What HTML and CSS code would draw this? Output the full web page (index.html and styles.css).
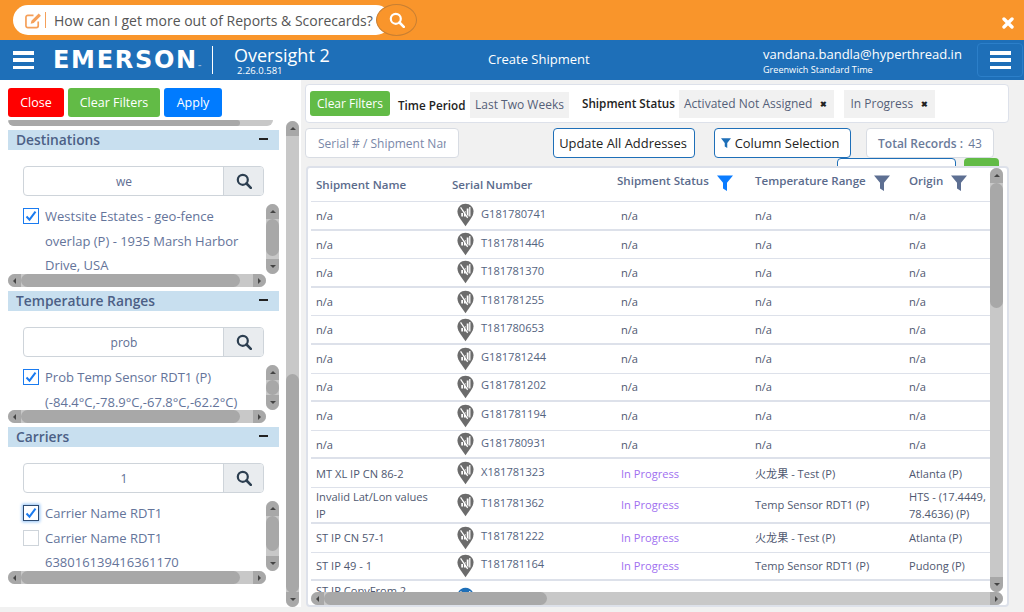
FILE: index.html
```html
<!DOCTYPE html>
<html lang="en">
<head>
<meta charset="utf-8">
<title>Oversight 2 - Create Shipment</title>
<link rel="stylesheet" href="styles.css">
</head>
<body>
<svg class="defs" width="0" height="0" aria-hidden="true">
  <defs>
    <symbol id="pin" viewBox="0 0 18 25">
      <path d="M9 .5C4.200.5.500 4.200.500 8.900c0 3 1.400 5.400 3.300 8.200L9 24.500l5.200-7.400c1.900-2.800 3.300-5.200 3.300-8.200C17.500 4.200 13.800.5 9 .5z" fill="currentColor"/>
      <path d="M4.500 10.500h1.900v3.500H4.500zM7.400 8.500h1.900v5.500H7.400zM10.300 5.500h1.900v8.500h-1.900zM12.900 4h1.300v10h-1.300z" fill="#fff"/>
      <path d="M4.500 4l7.500 11" stroke="#6b6b6b" stroke-width="1" fill="none"/>
      <path d="M3.800 4.500l7.500 11" stroke="#fff" stroke-width="1.300" fill="none"/>
    </symbol>
    <symbol id="mag" viewBox="0 0 16 16">
      <circle cx="6.800" cy="6.800" r="5" fill="none" stroke="currentColor" stroke-width="2.200"/>
      <path d="M10.500 10.500l4.300 4.300" stroke="currentColor" stroke-width="2.600" stroke-linecap="round"/>
    </symbol>
    <symbol id="funnel" viewBox="0 0 16 16">
      <path d="M0 .5h16L10 7.800V16l-4-2.500V7.800z" fill="currentColor"/>
    </symbol>
    <symbol id="tick" viewBox="0 0 14 14">
      <path d="M2.500 7.500l3 3.200 6-8" fill="none" stroke="#1a7bf0" stroke-width="2"/>
    </symbol>
  </defs>
</svg>

<div class="banner">
  <div class="ask">
    <svg class="ask-icon" viewBox="0 0 18 18" width="17" height="17"><path d="M14 10v4.500a2 2 0 0 1-2 2H3a2 2 0 0 1-2-2v-9a2 2 0 0 1 2-2h6" fill="none" stroke="#f5a05a" stroke-width="1.800"/><path d="M6 12.500l.8-3.200L14.500 1.500l2.400 2.400-7.700 7.800z" fill="#f5a05a"/></svg>
    <span class="ask-sep"></span>
    <span class="ask-text">How can I get more out of Reports &amp; Scorecards?</span>
    <span class="ask-go"><svg width="16" height="16" class="ask-mag"><use href="#mag"/></svg></span>
  </div>
  <svg class="banner-x" viewBox="0 0 12 12" width="12" height="12"><path d="M2 2l8 8M10 2l-8 8" stroke="#fff" stroke-width="3.400" stroke-linecap="round"/></svg>
</div>

<header class="topbar">
  <div class="burger burger-left"><i></i><i></i><i></i></div>
  <div class="logo">EMERSON<small>™</small></div>
  <div class="app">
    <div class="app-name">Oversight 2</div>
    <div class="app-ver">2.26.0.581</div>
  </div>
  <div class="page-title">Create Shipment</div>
  <div class="user">
    <div class="user-mail">vandana.bandla@hyperthread.in</div>
    <div class="user-tz">Greenwich Standard Time</div>
  </div>
  <div class="menu-btn"><div class="burger"><i></i><i></i><i></i></div></div>
</header>

<main class="main">
  <aside class="side">
    <div class="side-actions">
      <button class="btn btn-red">Close</button>
      <button class="btn btn-green">Clear Filters</button>
      <button class="btn btn-blue">Apply</button>
    </div>
    <div class="side-body">
      <div class="side-scroll">
        <div class="sb peek"><span class="sb-thumb th-peek"></span></div>

        <section class="group">
          <h3 class="group-head">Destinations<span class="minus"></span></h3>
          <div class="search"><span class="search-val">we</span><span class="search-btn"><svg width="16" height="16"><use href="#mag"/></svg></span></div>
          <div class="list-wrap">
            <div class="list list-a">
              <label class="item"><span class="cb on"><svg width="14" height="14"><use href="#tick"/></svg></span><span>Westsite Estates - geo-fence overlap (P) - 1935 Marsh Harbor Drive, USA</span></label>
            </div>
            <div class="sb v"><span class="sb-btn up"></span><span class="sb-track"><span class="sb-thumb th-a"></span></span><span class="sb-btn down"></span></div>
            <div class="sb h"><span class="sb-btn left"></span><span class="sb-track"><span class="sb-thumb th-h"></span></span><span class="sb-btn right"></span></div>
          </div>
        </section>

        <section class="group">
          <h3 class="group-head">Temperature Ranges<span class="minus"></span></h3>
          <div class="search"><span class="search-val">prob</span><span class="search-btn"><svg width="16" height="16"><use href="#mag"/></svg></span></div>
          <div class="list-wrap">
            <div class="list list-b">
              <label class="item"><span class="cb on"><svg width="14" height="14"><use href="#tick"/></svg></span><span>Prob Temp Sensor RDT1 (P) (-84.4°C,-78.9°C,-67.8°C,-62.2°C)</span></label>
            </div>
            <div class="sb v"><span class="sb-btn up"></span><span class="sb-track"><span class="sb-thumb th-b"></span></span><span class="sb-btn down"></span></div>
            <div class="sb h"><span class="sb-btn left"></span><span class="sb-track"><span class="sb-thumb th-h"></span></span><span class="sb-btn right"></span></div>
          </div>
        </section>

        <section class="group">
          <h3 class="group-head">Carriers<span class="minus"></span></h3>
          <div class="search"><span class="search-val">1</span><span class="search-btn"><svg width="16" height="16"><use href="#mag"/></svg></span></div>
          <div class="list-wrap">
            <div class="list list-a">
              <label class="item"><span class="cb on focus"><svg width="14" height="14"><use href="#tick"/></svg></span><span>Carrier Name RDT1</span></label>
              <label class="item"><span class="cb"></span><span>Carrier Name RDT1 638016139416361170</span></label>
            </div>
            <div class="sb v"><span class="sb-btn up"></span><span class="sb-track"><span class="sb-thumb th-c"></span></span><span class="sb-btn down"></span></div>
            <div class="sb h"><span class="sb-btn left"></span><span class="sb-track"><span class="sb-thumb th-h"></span></span><span class="sb-btn right"></span></div>
          </div>
        </section>
      </div>
      <div class="sb v side-sb"><span class="sb-btn up"></span><span class="sb-track"><span class="sb-thumb th-side"></span></span><span class="sb-btn down"></span></div>
    </div>
  </aside>

  <div class="content">
    <div class="filterbar">
      <button class="btn btn-green btn-sm">Clear Filters</button>
      <span class="f-label f-time">Time Period</span>
      <span class="chip chip-low">Last Two Weeks</span>
      <span class="f-label f-status">Shipment Status</span>
      <span class="chip">Activated Not Assigned<b class="chip-x">✖</b></span>
      <span class="chip chip-gap">In Progress<b class="chip-x">✖</b></span>
    </div>

    <div class="toolbar">
      <input class="serial" type="text" placeholder="Serial # / Shipment Name">
      <button class="tool tool-update">Update All Addresses</button>
      <button class="tool tool-col"><svg class="tool-ic" width="10" height="10"><use href="#funnel"/></svg>Column Selection</button>
      <div class="total"><b>Total Records :</b> <span>43</span></div>
    </div>

    <div class="peek-row"><span class="peek-a"></span><span class="peek-b"></span></div>

    <div class="panel">
      <div class="panel-top">
        <div class="tbl">
          <div class="row head">
            <div class="hc hc-low">Shipment Name</div>
            <div class="hc hc-low">Serial Number</div>
            <div class="hc">Shipment Status<svg class="fn fn-on" width="16" height="16"><use href="#funnel"/></svg></div>
            <div class="hc">Temperature Range<svg class="fn" width="16" height="16"><use href="#funnel"/></svg></div>
            <div class="hc">Origin<svg class="fn" width="16" height="16"><use href="#funnel"/></svg></div>
          </div>
          <div class="row"><div>n/a</div><div class="ser"><svg class="pin" width="17" height="24"><use href="#pin"/></svg><span>G181780741</span></div><div class="st">n/a</div><div>n/a</div><div>n/a</div></div>
          <div class="row"><div>n/a</div><div class="ser"><svg class="pin" width="17" height="24"><use href="#pin"/></svg><span>T181781446</span></div><div class="st">n/a</div><div>n/a</div><div>n/a</div></div>
          <div class="row"><div>n/a</div><div class="ser"><svg class="pin" width="17" height="24"><use href="#pin"/></svg><span>T181781370</span></div><div class="st">n/a</div><div>n/a</div><div>n/a</div></div>
          <div class="row"><div>n/a</div><div class="ser"><svg class="pin" width="17" height="24"><use href="#pin"/></svg><span>T181781255</span></div><div class="st">n/a</div><div>n/a</div><div>n/a</div></div>
          <div class="row"><div>n/a</div><div class="ser"><svg class="pin" width="17" height="24"><use href="#pin"/></svg><span>T181780653</span></div><div class="st">n/a</div><div>n/a</div><div>n/a</div></div>
          <div class="row"><div>n/a</div><div class="ser"><svg class="pin" width="17" height="24"><use href="#pin"/></svg><span>G181781244</span></div><div class="st">n/a</div><div>n/a</div><div>n/a</div></div>
          <div class="row"><div>n/a</div><div class="ser"><svg class="pin" width="17" height="24"><use href="#pin"/></svg><span>G181781202</span></div><div class="st">n/a</div><div>n/a</div><div>n/a</div></div>
          <div class="row"><div>n/a</div><div class="ser"><svg class="pin" width="17" height="24"><use href="#pin"/></svg><span>G181781194</span></div><div class="st">n/a</div><div>n/a</div><div>n/a</div></div>
          <div class="row"><div>n/a</div><div class="ser"><svg class="pin" width="17" height="24"><use href="#pin"/></svg><span>G181780931</span></div><div class="st">n/a</div><div>n/a</div><div>n/a</div></div>
          <div class="row"><div class="nm">MT XL IP CN 86-2</div><div class="ser"><svg class="pin" width="17" height="24"><use href="#pin"/></svg><span>X181781323</span></div><div class="st prog">In Progress</div><div>火龙果 - Test (P)</div><div>Atlanta (P)</div></div>
          <div class="row tall"><div class="nm">Invalid Lat/Lon values IP</div><div class="ser"><svg class="pin" width="17" height="24"><use href="#pin"/></svg><span>T181781362</span></div><div class="st prog">In Progress</div><div>Temp Sensor RDT1 (P)</div><div>HTS - (17.4449, 78.4636) (P)</div></div>
          <div class="row"><div class="nm">ST IP CN 57-1</div><div class="ser"><svg class="pin" width="17" height="24"><use href="#pin"/></svg><span>T181781222</span></div><div class="st prog">In Progress</div><div>火龙果 - Test (P)</div><div>Atlanta (P)</div></div>
          <div class="row"><div class="nm">ST IP 49 - 1</div><div class="ser"><svg class="pin" width="17" height="24"><use href="#pin"/></svg><span>T181781164</span></div><div class="st prog">In Progress</div><div>Temp Sensor RDT1 (P)</div><div>Pudong (P)</div></div>
          <div class="row tall"><div class="nm">ST IP CopyFrom 2 Shipment</div><div class="ser"><svg class="pin pin-blue" width="17" height="24"><use href="#pin"/></svg></div><div></div><div></div><div></div></div>
        </div>
        <div class="sb v"><span class="sb-btn up"></span><span class="sb-track"><span class="sb-thumb th-tv"></span></span><span class="sb-btn down"></span></div>
      </div>
      <div class="sb h tbl-h"><span class="sb-btn left"></span><span class="sb-track"><span class="sb-thumb th-th"></span></span><span class="sb-btn right"></span></div>
    </div>
  </div>
</main>
</body>
</html>
```

FILE: styles.css
```css
* { box-sizing: border-box; }
html, body { margin: 0; padding: 0; }
body {
  width: 1024px; height: 612px; overflow: hidden;
  font-family: "Open Sans", "Noto Sans CJK SC", sans-serif;
  font-size: 12px; color: #555f78; background: #f1f1f1;
  display: flex; flex-direction: column;
}
.defs { position: absolute; }

/* banner */
.banner { height: 40px; background: #f9952b; display: flex; align-items: flex-start; padding: 5px 10px 0 13px; flex: none; }
.ask { width: 378px; height: 30px; background: #fff; border-radius: 15px; display: flex; align-items: center; padding-left: 12px; position: relative; }
.ask-icon { flex: none; }
.ask-sep { width: 1px; height: 16px; background: #f5a05a; margin: 0 8px 0 3px; }
.ask-text { font-size: 14px; color: #555; white-space: nowrap; }
.ask-go { position: absolute; left: 363px; top: -1px; width: 41px; height: 32px; border-radius: 50%; background: #f9952b; border: 1px solid #c77f33; display: flex; align-items: center; justify-content: center; color: #fff; }
.ask-mag { color: #fff; }
.banner-x { margin: 12px 0 0 auto; }

/* top bar */
.topbar { height: 40px; background: #1e6fb8; color: #fff; display: flex; align-items: center; flex: none; padding-left: 13px; position: relative; }
.burger { display: flex; flex-direction: column; justify-content: space-between; width: 21px; height: 18px; }
.burger i { display: block; height: 3.500px; background: #fff; }
.logo { margin-left: 19px; width: 160px; height: 28px; border-right: 1px solid #fff; font-family: "DejaVu Sans", sans-serif; font-weight: 700; font-size: 24px; line-height: 28px; letter-spacing: 1.700px; white-space: nowrap; }
.logo small { font-size: 4px; font-weight: 400; letter-spacing: 0; }
.app { margin-left: 21px; width: 254px; }
.app-name { font-size: 18px; line-height: 22px; }
.app-ver { font-size: 9.500px; line-height: 10px; margin-left: 3px; }
.page-title { width: 275px; font-size: 13px; position: relative; top: -1px; }
.user { width: 214px; }
.user-mail { font-size: 13px; line-height: 16px; margin-top: 2px; }
.user-tz { font-size: 9.100px; line-height: 14px; margin-top: 1px; }
.menu-btn { width: 46px; height: 34px; border: 1px solid #2c7fc9; border-radius: 4px; display: flex; align-items: center; justify-content: center; }

/* layout */
.main { flex: 1; display: flex; min-height: 0; }
.side { width: 301px; height: 527px; background: #fff; display: flex; flex-direction: column; flex: none; }
.side-actions { height: 40px; padding: 8px 8px 0; display: flex; gap: 4px; flex: none; }
.btn { border: 0; border-radius: 3px; color: #fff; height: 29px; font: 12.500px "Open Sans", sans-serif; padding: 0; cursor: pointer; }
.btn-red { background: #f00; width: 56px; }
.btn-green { background: #62bb46; width: 92px; }
.btn-blue { background: #007bff; width: 58px; }
.btn-sm { width: 80px; height: 25px; font-size: 12px; }

.side-body { flex: 1; display: flex; min-height: 0; padding-right: 1px; }
.side-scroll { width: 286px; overflow: hidden; padding: 0 7px 0 8px; }

/* scrollbars */
.sb { background: #c8c8c8; display: flex; border-radius: 7px; overflow: hidden; flex: none; }
.sb.v { flex-direction: column; width: 13px; height: 70px; }
.sb.h { height: 13px; }
.sb-track { flex: 1; position: relative; display: flex; min-width: 0; min-height: 0; }
.sb.v .sb-track { flex-direction: column; }
.sb-thumb { background: #a8a8a8; border-radius: 7px; display: block; flex: none; }
.sb-btn { background: #a8a8a8; flex: none; display: flex; align-items: center; justify-content: center; }
.sb.v .sb-btn { height: 15px; }
.sb.h .sb-btn { width: 13px; }
.sb-btn::after { content: ""; border: 3.500px solid transparent; }
.up::after { border-bottom-color: #444; border-top-width: 0; }
.down::after { border-top-color: #444; border-bottom-width: 0; }
.left::after { border-right-color: #444; border-left-width: 0; }
.right::after { border-left-color: #444; border-right-width: 0; }
.sb.peek { height: 6px; margin: 0 6px 4px 0; border-radius: 0 0 7px 7px; }
.th-peek { width: 232px; height: 6px; }
.th-h { width: 219px; }
.sb.v .th-a { height: 37px; }
.sb.v .th-b { height: 15px; }
.sb.v .th-c { height: 35px; }
.sb.v .th-side { height: 219px; margin-top: 238px; }
.sb.v .th-tv { height: 125px; }
.th-th { width: 223px; }
.sb.v.side-sb { height: 486px; margin-top: 1px; }

/* filter groups */
.group { margin-bottom: 4px; }
.group-head { margin: 0; height: 20px; line-height: 20px; background: #c8dfef; color: #4c5f86; font-size: 13.800px; font-weight: 600; padding-left: 8px; position: relative; }
.minus { position: absolute; right: 11px; top: 8px; width: 9px; height: 2px; background: #222; }
.search { margin: 16px 15px 8px; height: 30px; display: flex; border: 1px solid #ced4da; border-radius: 4px; background: #fff; }
.search-val { flex: 1; text-align: center; line-height: 30px; font-size: 12px; color: #5e6e93; padding-left: 1px; }
.search-btn { width: 40px; background: #e9ecef; border-left: 1px solid #ced4da; color: #2c3e50; display: flex; align-items: center; justify-content: center; border-radius: 0 3px 3px 0; }
.list-wrap { display: grid; grid-template-columns: 258px 13px; }
.list { overflow: hidden; padding: 0 20px 0 15px; font-size: 13px; line-height: 24.700px; color: #64749a; }
.list-a { height: 70px; }
.list-b { height: 45px; }
.group:nth-of-type(2) .sb.v { height: 45px; }
.item { display: flex; gap: 6px; }
.cb { width: 16px; height: 16px; flex: none; margin-top: 4px; border: 1px solid #ced4da; display: flex; align-items: center; justify-content: center; background: #fff; }
.cb.on { border-color: #1a7bf0; }
.cb.focus { border-color: #2d4a70; box-shadow: 0 0 3px 1px #8fc0f5; }

/* content */
.content { flex: 1; padding: 4px 0 0 4px; min-width: 0; }
.filterbar { width: 704px; height: 39px; background: #fff; border: 1px solid #dde1ea; border-radius: 4px; display: flex; align-items: center; padding-left: 4px; }
.f-label { color: #222; font-weight: 600; font-size: 11.700px; white-space: nowrap; }
.f-time { margin-left: 8px; width: 72px; position: relative; top: 1px; }
.f-status { margin-left: 13px; width: 97px; position: relative; top: -1px; }
.chip { background: #f1f1f1; height: 28px; line-height: 27px; padding: 0 5px; font-size: 12px; color: #555f78; white-space: nowrap; display: inline-flex; }
.chip-low { height: 26px; line-height: 26px; margin-top: 3px; width: 99px; justify-content: center; padding: 0; }
.chip-gap { margin-left: 10px; padding-left: 6px; }
.chip-x { font-size: 8px; color: #222; margin: 0 2px 0 8px; font-weight: 700; }
.toolbar { margin-top: 5px; display: flex; height: 30px; align-items: stretch; }
.serial { width: 154px; border: 1px solid #d8dce3; border-radius: 4px; padding: 0 12px; background: #fff; font: 12px "Open Sans", sans-serif; color: #64749a; outline: none; }
.serial::placeholder { color: #7a88a8; opacity: 1; }
.tool { background: #fff; border: 1px solid #1e6fb8; border-radius: 4px; color: #222; font: 12.900px "Open Sans", sans-serif; padding: 0; white-space: nowrap; }
.tool-update { width: 142px; margin-left: 94px; padding-right: 2px; }
.tool-col { width: 137px; margin-left: 19px; padding-right: 5px; }
.tool-ic { color: #1e6fb8; margin-right: 4px; }
.total { width: 128px; margin-left: 15px; background: #fff; border: 1px solid #d8dce3; border-radius: 4px; text-align: center; line-height: 29px; color: #6a7a99; white-space: nowrap; }
.total b { font-weight: 600; margin-right: 2px; }
.peek-row { height: 8px; overflow: hidden; display: flex; padding-left: 532px; gap: 8px; }
.peek-a { width: 119px; height: 20px; background: #fff; border: 1px solid #1e6fb8; border-radius: 4px; }
.peek-b { width: 35px; height: 20px; background: #62bb46; border-radius: 4px; }

/* table panel */
.panel { width: 703px; height: 441px; margin-left: 1px; background: #fff; border: 2px solid #dde1ea; border-radius: 4px; display: flex; flex-direction: column; padding: 0 3px 0 3px; }
.panel-top { display: flex; height: 424px; flex: none; }
.tbl { width: 679px; overflow: hidden; flex: none; }
.panel-top > .sb.v { height: 424px; }
.tbl-h { width: 692px; margin-right: 0; }
.row { display: grid; grid-template-columns: 136px 165px 138px 154px 86px; height: 28.600px; align-items: center; border-bottom: 1px solid #dde1ea; font-size: 11.100px; line-height: 17px; color: #4f5870; }
.row > div { padding-left: 5px; }
.row > .nm { padding-right: 14px; }
.row:nth-child(even) { border-bottom-width: 2px; }
.row.tall { height: 36px; }
.row.head { height: 34px; font-size: 11.550px; font-weight: 600; color: #5b6b8c; border-bottom-width: 1px; }
.hc { display: flex; align-items: center; white-space: nowrap; margin-top: -8px; }
.hc-low { margin-top: 0; }
.fn { color: #5d6f92; margin-left: 8px; margin-top: 4px; flex: none; }
.fn-on { color: #0a7cff; }
.row .ser { display: flex; align-items: center; padding-left: 10px; gap: 7px; color: #55647f; font-size: 11.100px; }
.ser span { position: relative; top: -2px; }
.pin { color: #6b6b6b; flex: none; }
.pin-blue { color: #1e6fb8; }
.row .st { padding-left: 9px; }
.row .prog { color: #a070f0; }
```
